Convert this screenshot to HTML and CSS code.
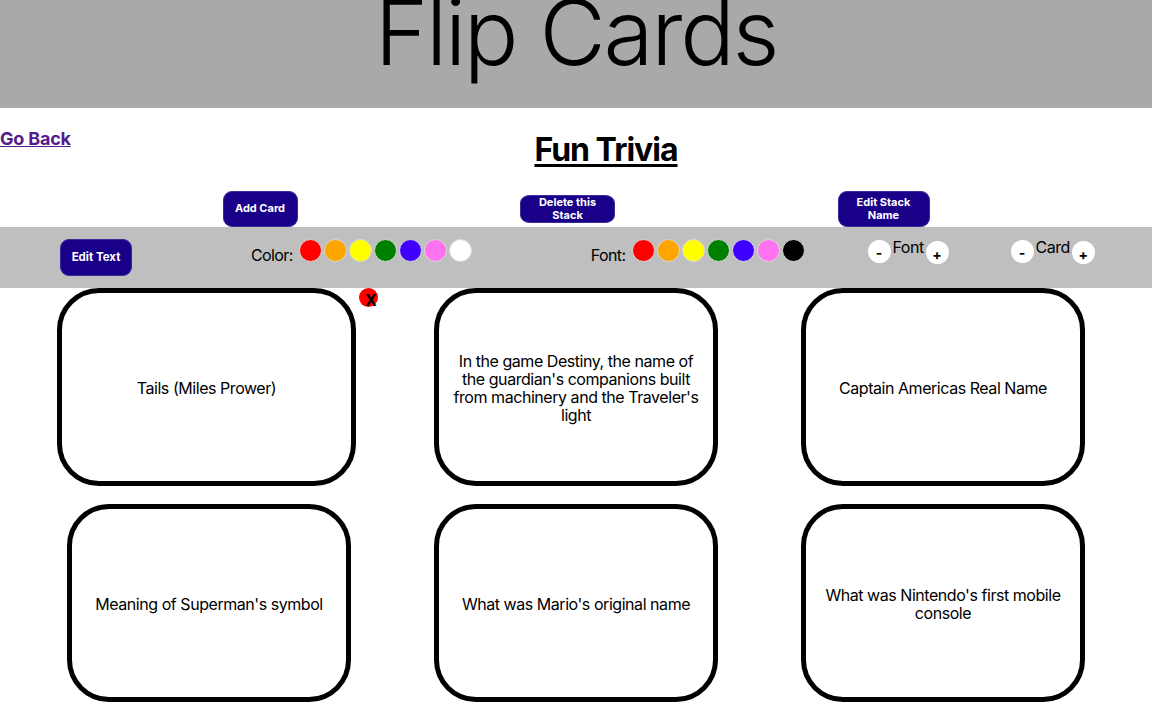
FILE: index.html
```html
<!DOCTYPE html>
<html>
<head>
<meta charset="utf-8">
<title>Flip Cards</title>
<link rel="stylesheet" href="styles.css">
</head>
<body>
<header class="site-header">
  <h1 class="site-title">Flip Cards</h1>
</header>
<div class="title-row">
  <a class="back-link" href="#">Go Back</a>
  <h2 class="stack-title">Fun Trivia</h2>
</div>
<div class="actions">
  <button class="btn btn-tall btn-add">Add Card</button>
  <button class="btn btn-short btn-delete">Delete this Stack</button>
  <button class="btn btn-tall btn-rename">Edit Stack Name</button>
</div>
<div class="toolbar">
  <button class="btn btn-edit">Edit Text</button>
  <div class="swatch-group group-color">
    <span class="label">Color:</span>
    <span class="dot red"></span><span class="dot orange"></span><span class="dot yellow"></span><span class="dot green"></span><span class="dot blue"></span><span class="dot pink"></span><span class="dot white"></span>
  </div>
  <div class="swatch-group group-font">
    <span class="label">Font:</span>
    <span class="dot red"></span><span class="dot orange"></span><span class="dot yellow"></span><span class="dot green"></span><span class="dot blue"></span><span class="dot pink"></span><span class="dot black"></span>
  </div>
  <div class="sizer sizer-font">
    <span class="step minus">-</span><span class="sizer-label">Font</span><span class="step plus">+</span>
  </div>
  <div class="sizer sizer-card">
    <span class="step minus">-</span><span class="sizer-label">Card</span><span class="step plus">+</span>
  </div>
</div>
<main class="cards">
  <div class="card-row">
    <div class="card card-selected">
      <p class="card-text">Tails (Miles Prower)</p>
      <span class="delete-x">X</span>
    </div>
    <div class="card"><p class="card-text">In the game Destiny, the name of the guardian's companions built from machinery and the Traveler's light</p></div>
    <div class="card"><p class="card-text">Captain Americas Real Name</p></div>
  </div>
  <div class="card-row">
    <div class="card"><p class="card-text">Meaning of Superman's symbol</p></div>
    <div class="card"><p class="card-text">What was Mario's original name</p></div>
    <div class="card"><p class="card-text">What was Nintendo's first mobile console</p></div>
  </div>
</main>
</body>
</html>
```
FILE: styles.css
```css
* { box-sizing: border-box; }
html, body {
  margin: 0;
  padding: 0;
  font-family: Inter, "Liberation Sans", sans-serif;
  color: #000;
  background: #fff;
  overflow: hidden;
}
.site-header {
  height: 108px;
  background: #a9a9a9;
  overflow: hidden;
  display: flex;
  justify-content: center;
}
.site-title {
  margin: -13px 0 0 0;
  font-size: 91px;
  line-height: 1;
  font-weight: 300;
  letter-spacing: -2.3px;
}
.title-row {
  display: grid;
  grid-template-columns: 74px 1fr;
  height: 82px;
}
.back-link {
  margin-top: 20px;
  font-size: 18px;
  font-weight: 700;
  color: #551a8b;
  text-decoration: underline;
  white-space: nowrap;
  line-height: 22px;
  height: 22px;
  letter-spacing: -0.2px;
}
.stack-title {
  margin: 23px 0 0 0;
  padding-right: 14px;
  text-align: center;
  font-size: 32px;
  font-weight: 700;
  line-height: 38px;
  letter-spacing: -1px;
  text-decoration: underline;
  text-decoration-thickness: 3px;
  text-underline-offset: 3px;
}
.actions {
  display: flex;
  justify-content: space-evenly;
  align-items: center;
  height: 37px;
}
.btn {
  flex-shrink: 0;
  background: #1a0088;
  color: #fff;
  border: 1px solid #3a2a9a;
  border-radius: 9px;
  font-family: Inter, "Liberation Sans", sans-serif;
  font-weight: 700;
  font-size: 11px;
  line-height: 13px;
  padding: 0;
  text-align: center;
}
.btn-tall { height: 36px; }
.btn-short { height: 28px; border-radius: 10px / 8px; }
.btn-add { width: 75px; }
.btn-delete { width: 95px; padding: 0 8px; }
.btn-rename { width: 92px; padding: 0 12px; }
.btn-edit { width: 72px; height: 37px; font-size: 11.5px; }
.toolbar {
  height: 61px;
  background: #bfbfbf;
  display: flex;
  align-items: flex-start;
  padding: 12px 0 0 60px;
}
.toolbar > * { flex-shrink: 0; }
.swatch-group {
  display: flex;
  align-items: center;
  height: 23px;
}
.group-color { margin-left: 119px; }
.group-font { margin-left: 117px; }
.label {
  font-size: 16px;
  margin-right: 6px;
  letter-spacing: -0.6px;
  position: relative;
  top: 4px;
}
.dot {
  width: 23px;
  height: 23px;
  border-radius: 50%;
  border: 1px solid #d9d9d9;
  display: block;
  margin-right: 2px;
}
.red { background: #ff0000; }
.orange { background: #ffa500; }
.yellow { background: #ffff00; }
.green { background: #008000; }
.blue { background: #4000ff; }
.pink { background: #ff73f0; }
.white { background: #ffffff; }
.black { background: #000000; }
.sizer {
  display: flex;
  align-items: flex-start;
  gap: 2px;
  padding-top: 1px;
}
.sizer-font { margin-left: 61px; }
.sizer-card { margin-left: 62px; }
.step {
  width: 23px;
  height: 23px;
  border-radius: 50%;
  background: #fff;
  display: flex;
  align-items: center;
  justify-content: center;
  font-weight: 700;
  font-size: 14px;
}
.step.minus { padding-top: 2px; }
.step.plus { margin-top: 1px; padding-top: 3px; }
.sizer-label {
  font-size: 16px;
  line-height: 16px;
  margin-top: -1px;
  letter-spacing: -0.5px;
}
.cards {
  display: flex;
  flex-direction: column;
  gap: 18px;
}
.card-row {
  display: flex;
  gap: 83px;
  padding-left: 67px;
}
.card {
  position: relative;
  width: 284px;
  height: 198px;
  border: 5px solid #000;
  border-radius: 42px;
  display: flex;
  align-items: center;
  justify-content: center;
  padding: 0 10px;
  flex-shrink: 0;
}
.card-selected {
  width: 299px;
  margin-left: -10px;
  margin-right: -5px;
}
.card-text {
  margin: 0;
  padding-top: 1px;
  font-size: 16px;
  line-height: 18px;
  letter-spacing: -0.45px;
  text-align: center;
}
.delete-x {
  position: absolute;
  top: -5px;
  right: -27px;
  width: 19px;
  height: 19px;
  border-radius: 50%;
  background: #ff0000;
  font-weight: 700;
  font-size: 16px;
  line-height: 16px;
  padding: 4px 0 0 6px;
  color: #000;
}
```
